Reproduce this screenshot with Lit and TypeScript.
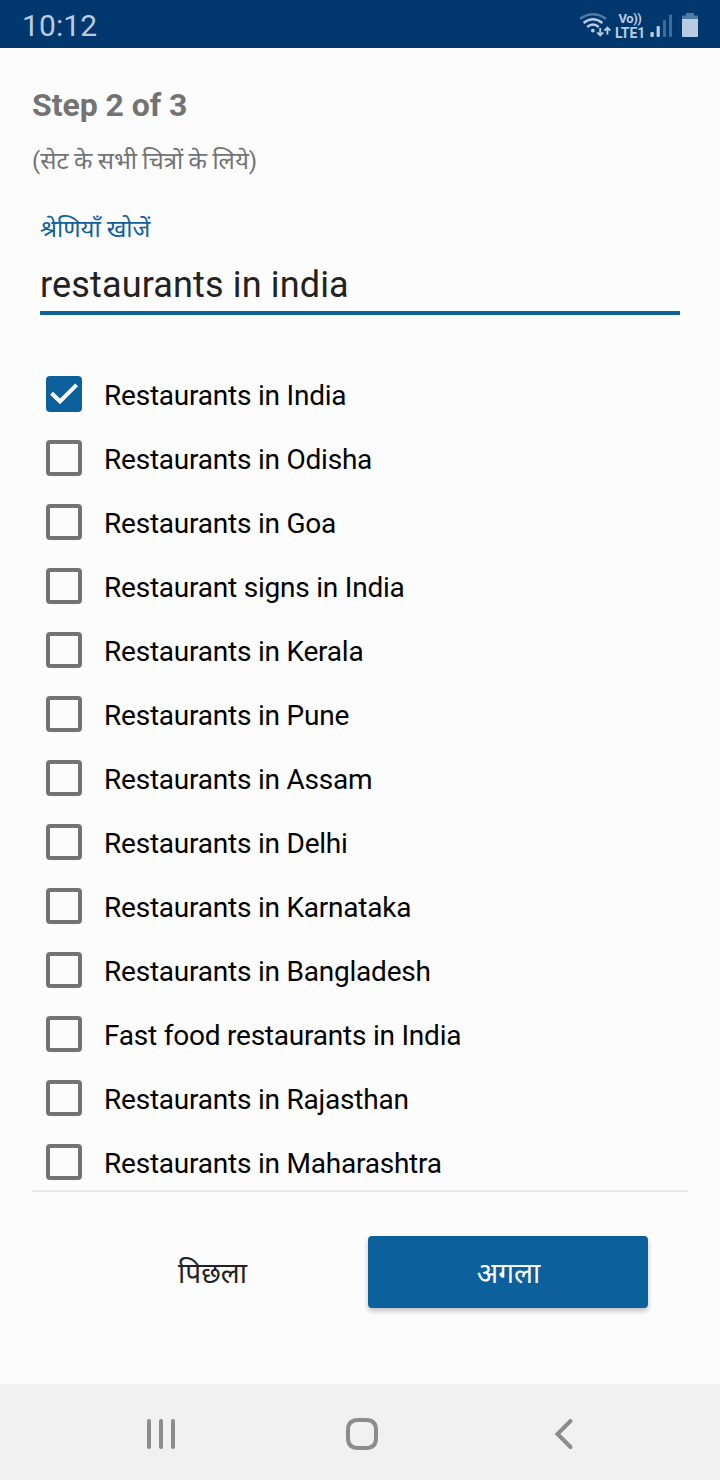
import { LitElement, html, css } from "lit";
import { customElement, property, state } from "lit/decorators.js";
import { classMap } from "lit/directives/class-map.js";

@customElement("status-bar")
class StatusBar extends LitElement {
  static styles = css`
    :host {
      display: flex;
      justify-content: space-between;
      height: 48px;
      box-sizing: border-box;
      padding: 0 20px 0 22px;
      background: #00376d;
      color: #b9cbe2;
    }
    .time {
      font-size: 30px;
      line-height: 52px;
      letter-spacing: 0.1px;
    }
    .icons {
      display: flex;
    }
    .icons svg {
      display: block;
      height: 48px;
    }
    .network {
      display: flex;
      flex-direction: column;
      align-items: center;
      width: 36px;
      padding-top: 12px;
      white-space: nowrap;
    }
    .network .vo {
      font-size: 13px;
      line-height: 14px;
      font-weight: 700;
      letter-spacing: -0.4px;
    }
    .network .lte {
      font-size: 14px;
      line-height: 14px;
      font-weight: 700;
      letter-spacing: -0.1px;
    }
  `;
  render() {
    return html`
      <span class="time">10:12</span>
      <div class="icons">
        <svg width="34" height="48" viewBox="578 0 34 48" fill="none" stroke="#b9cbe2" stroke-width="2.4">
          <path d="M580 18.8Q593 9.6 606 18.8" stroke="#5279a4" />
          <path d="M583.6 23Q593 15.4 602.4 23" />
          <path d="M587.2 27Q593 22.2 598.8 27" />
          <circle cx="592.8" cy="30.6" r="1.9" fill="#b9cbe2" stroke="none" />
          <path d="M600.2 28V35.4M597.2 32.4L600.2 35.4L603.2 32.4M607.4 34.6V27.6M604.4 30.6L607.4 27.6L610.4 30.6" stroke-width="1.9" />
        </svg>
        <div class="network"><span class="vo">Vo))</span><span class="lte">LTE1</span></div>
        <svg width="52" height="48" viewBox="648 0 52 48" fill="#b9cbe2">
          <rect x="650.4" y="32" width="3.4" height="5" rx="1" />
          <rect x="656.6" y="26" width="3.2" height="11" rx="1" />
          <rect x="663" y="20" width="3" height="17" rx="1" fill="#416b9a" />
          <rect x="669" y="14.5" width="3" height="22.5" rx="1" fill="#416b9a" />
          <path d="M682 19V16.5Q682 15.5 683 15.5H686V13H694V15.5H697Q698 15.5 698 16.5V19Z" fill="#5279a4" />
          <path d="M682 19H698V36Q698 37 697 37H683Q682 37 682 36Z" />
        </svg>
      </div>
    `;
  }
}

@customElement("category-row")
class CategoryRow extends LitElement {
  @property() label = "";
  @property({ type: Boolean }) checked = false;
  static styles = css`
    :host {
      display: flex;
      align-items: center;
      height: 64px;
      padding-left: 14px;
    }
    .box {
      flex: none;
      box-sizing: border-box;
      width: 36px;
      height: 36px;
      margin-right: 22px;
      border: 4px solid #737373;
      border-radius: 4px;
    }
    .box.on {
      border-color: #0c609c;
      background: #0c609c;
    }
    svg {
      display: block;
      width: 28px;
      height: 28px;
    }
    .label {
      padding-top: 3px;
      font-size: 28px;
      line-height: 34px;
      letter-spacing: -0.22px;
      color: #000;
      white-space: nowrap;
    }
  `;
  render() {
    return html`
      <span class=${classMap({ box: true, on: this.checked })}>
        ${this.checked
          ? html`<svg viewBox="0 0 28 28" fill="none" stroke="#fff" stroke-width="4">
              <path d="M1.6 13.2L10 21.4L26.6 4.9" />
            </svg>`
          : ""}
      </span>
      <span class="label">${this.label}</span>
    `;
  }
}

@customElement("nav-bar")
class NavBar extends LitElement {
  static styles = css`
    :host {
      display: block;
      height: 96px;
      background: #f1f1f1;
    }
    svg {
      display: block;
    }
  `;
  render() {
    return html`
      <svg width="720" height="96" viewBox="0 0 720 96" fill="none" stroke="#8c8c8c" stroke-width="4" stroke-linecap="round">
        <path d="M149 37V63M161 37V63M173 37V63" />
        <path d="M358 36H366Q376 36 376 46V54Q376 64 366 64H358Q348 64 348 54V46Q348 36 358 36Z" />
        <path d="M570.5 37L557.5 50L570.5 63" />
      </svg>
    `;
  }
}

@customElement("app-root")
class AppRoot extends LitElement {
  @state() private selected = new Set(["Restaurants in India"]);
  private categories = [
    "Restaurants in India",
    "Restaurants in Odisha",
    "Restaurants in Goa",
    "Restaurant signs in India",
    "Restaurants in Kerala",
    "Restaurants in Pune",
    "Restaurants in Assam",
    "Restaurants in Delhi",
    "Restaurants in Karnataka",
    "Restaurants in Bangladesh",
    "Fast food restaurants in India",
    "Restaurants in Rajasthan",
    "Restaurants in Maharashtra",
  ];
  static styles = css`
    :host {
      display: flex;
      flex-direction: column;
      width: 720px;
      height: 1480px;
      overflow: hidden;
      background: #fcfcfc;
      font-family: Roboto, "Noto Sans", sans-serif;
    }
    main {
      flex: 1;
      min-height: 0;
      display: flex;
      flex-direction: column;
      padding: 0 32px;
    }
    .title {
      margin: 38px 0 0;
      font-size: 32px;
      line-height: 38px;
      font-weight: 700;
      letter-spacing: -0.05px;
      color: #737373;
    }
    .subtitle {
      margin: 19px 0 0;
      font-size: 24px;
      line-height: 36px;
      word-spacing: -0.6px;
      color: #737373;
    }
    .field {
      margin: 32px 8px 0;
      height: 104px;
      box-sizing: border-box;
      border-bottom: 4px solid #11609a;
    }
    .field-label {
      font-size: 24px;
      line-height: 36px;
      color: #11609a;
    }
    .value {
      padding-top: 16px;
      font-size: 36px;
      line-height: 44px;
      letter-spacing: 0.15px;
      color: #222;
    }
    .list {
      flex: none;
      height: 828px;
      margin-top: 47px;
      overflow: hidden;
      border-bottom: 2px solid #e9e9e9;
    }
    .actions {
      display: flex;
      gap: 16px;
      padding: 44px 40px 0 40px;
    }
    .button {
      box-sizing: border-box;
      width: 280px;
      height: 72px;
      padding-left: 1px;
      border-radius: 4px;
      text-align: center;
      font-size: 28px;
      line-height: 76px;
      color: #222;
    }
    .primary {
      background: #0c609c;
      color: #fff;
      box-shadow: 0 3px 5px rgba(0, 0, 0, 0.24);
    }
  `;
  render() {
    return html`
      <status-bar></status-bar>
      <main>
        <h1 class="title">Step 2 of 3</h1>
        <p class="subtitle">(सेट के सभी चित्रों के लिये)</p>
        <div class="field">
          <div class="field-label">श्रेणियाँ खोजें</div>
          <div class="value">restaurants in india</div>
        </div>
        <div class="list">
          ${this.categories.map(
            (c) => html`<category-row .label=${c} .checked=${this.selected.has(c)}></category-row>`
          )}
        </div>
        <div class="actions">
          <div class="button">पिछला</div>
          <div class="button primary">अगला</div>
        </div>
      </main>
      <nav-bar></nav-bar>
    `;
  }
}
